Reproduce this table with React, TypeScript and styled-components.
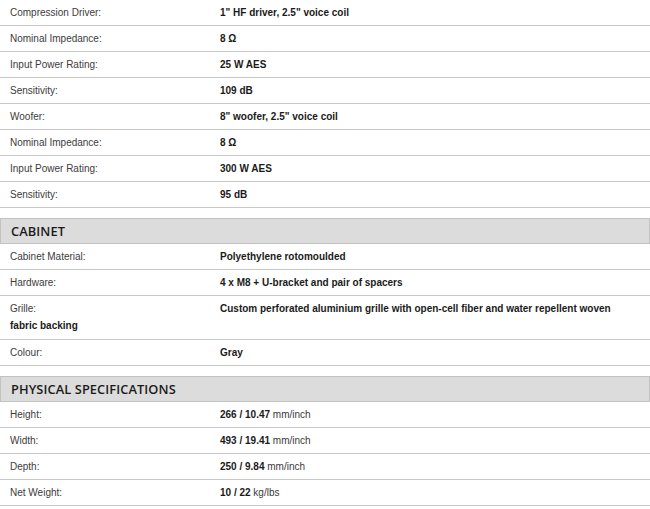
import React from "react";
import styled, { createGlobalStyle } from "styled-components";

const GlobalStyle = createGlobalStyle`
  html, body {
    margin: 0;
    padding: 0;
    background: #ffffff;
  }
  body {
    font-family: "Liberation Sans", Arial, sans-serif;
  }
`;

type Spec = { label: string; value: React.ReactNode; extra?: string };

const driverSpecs: Spec[] = [
  { label: "Compression Driver:", value: <b>1" HF driver, 2.5" voice coil</b> },
  { label: "Nominal Impedance:", value: <b>8 Ω</b> },
  { label: "Input Power Rating:", value: <b>25 W AES</b> },
  { label: "Sensitivity:", value: <b>109 dB</b> },
  { label: "Woofer:", value: <b>8" woofer, 2.5" voice coil</b> },
  { label: "Nominal Impedance:", value: <b>8 Ω</b> },
  { label: "Input Power Rating:", value: <b>300 W AES</b> },
  { label: "Sensitivity:", value: <b>95 dB</b> },
];

const cabinetSpecs: Spec[] = [
  { label: "Cabinet Material:", value: <b>Polyethylene rotomoulded</b> },
  { label: "Hardware:", value: <b>4 x M8 + U-bracket and pair of spacers</b> },
  {
    label: "Grille:",
    value: <b>Custom perforated aluminium grille with open-cell fiber and water repellent woven</b>,
    extra: "fabric backing",
  },
  { label: "Colour:", value: <b>Gray</b> },
];

const physicalSpecs: Spec[] = [
  { label: "Height:", value: <><b>266 / 10.47</b> mm/inch</> },
  { label: "Width:", value: <><b>493 / 19.41</b> mm/inch</> },
  { label: "Depth:", value: <><b>250 / 9.84</b> mm/inch</> },
  { label: "Net Weight:", value: <><b>10 / 22</b> kg/lbs</> },
];

export default function App() {
  return (
    <>
      <GlobalStyle />
      <Page>
        <SpecTable rows={driverSpecs} />
        <Section>
          <SectionTitle>CABINET</SectionTitle>
          <SpecTable rows={cabinetSpecs} />
        </Section>
        <Section>
          <SectionTitle>PHYSICAL SPECIFICATIONS</SectionTitle>
          <SpecTable rows={physicalSpecs} />
        </Section>
      </Page>
    </>
  );
}

function SpecTable({ rows }: { rows: Spec[] }) {
  return (
    <div>
      {rows.map((r, i) => (
        <Row key={r.label + i}>
          <Label>
            {r.label}
            {r.extra ? <Extra>{r.extra}</Extra> : null}
          </Label>
          <Value>{r.value}</Value>
        </Row>
      ))}
    </div>
  );
}

const Page = styled.div`
  width: 650px;
  color: #333;
  font-size: 10px;
`;

const Section = styled.section`
  margin-top: 10px;
`;

const SectionTitle = styled.h3`
  margin: 0;
  height: 24px;
  line-height: 24px;
  padding-left: 10px;
  background: #dcdcdc;
  border: 1px solid #c2c2c2;
  font-family: "Open Sans", "Liberation Sans", sans-serif;
  font-weight: 600;
  font-size: 12.8px;
  color: #1a1a1a;
  letter-spacing: 0.1px;
`;

const Row = styled.div`
  display: grid;
  grid-template-columns: 220px 1fr;
  padding: 4px 0;
  line-height: 17px;
  border-bottom: 1px solid #c9c9c9;
`;

const Label = styled.div`
  padding-left: 10px;
  color: #3c3c3c;
`;

const Extra = styled.b`
  display: block;
  color: #1a1a1a;
  padding-bottom: 1px;
`;

const Value = styled.div`
  color: #3a3a3a;

  b {
    color: #1a1a1a;
  }
`;
